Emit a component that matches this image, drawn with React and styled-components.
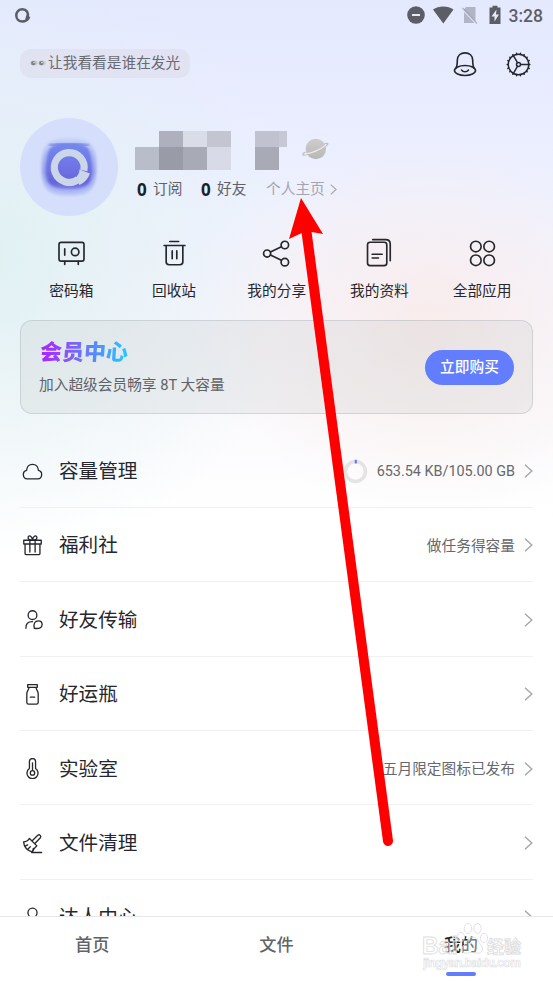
import styled, { createGlobalStyle, css } from 'styled-components';

const GlobalStyle = createGlobalStyle`
  * {
    box-sizing: border-box;
  }

  body {
    margin: 0;
    background: #fff;
    font-family: Roboto, 'Noto Sans CJK SC', sans-serif;
    color: #26272c;
  }
`;

// Whole phone screen
const Screen = styled.div`
  position: relative;
  display: flex;
  flex-direction: column;
  width: 553px;
  height: 983px;
  overflow: hidden;
  background:
    radial-gradient(ellipse 230px 190px at 430px 325px, rgba(249, 234, 233, 0.85), rgba(250, 236, 234, 0.45) 50%, rgba(250, 236, 234, 0) 100%),
    radial-gradient(ellipse 330px 300px at -20px 260px, rgba(224, 241, 242, 1), rgba(226, 241, 243, 0.5) 50%, rgba(226, 241, 243, 0) 100%),
    linear-gradient(#e4e9fe 0, #e9ecff 100px, #eef1ff 200px, #f4f4fd 290px, #fafafd 400px, #fff 520px);
`;

const StatusBar = styled.div`
  display: flex;
  justify-content: space-between;
  align-items: center;
  flex: none;
  height: 30px;
  padding: 0 10px 0 14px;
  color: #5c5e66;
`;

const StatusIcons = styled.div`
  display: flex;
  align-items: center;
`;

const Clock = styled.span`
  margin-left: 8px;
  padding-top: 1px;
  font-size: 17.5px;
  font-weight: 500;
  line-height: 20px;
`;

const Header = styled.header`
  display: flex;
  justify-content: space-between;
  align-items: center;
  flex: none;
  height: 68px;
  padding: 0 22px 0 20px;
`;

const Chip = styled.div`
  display: flex;
  align-items: center;
  width: 170px;
  height: 29px;
  margin-top: -2px;
  padding: 0 0 1px 10px;
  border-radius: 11px;
  background: #e1e3f3;
  color: #686a72;
  font-size: 14.7px;
  line-height: 22px;
  white-space: nowrap;

  svg {
    margin-right: 2px;
  }
`;

const HeaderActions = styled.div`
  display: flex;
  align-items: center;
  gap: 28px;
`;

const Profile = styled.section`
  display: flex;
  flex: none;
  height: 118px;
  padding: 20px 20px 0;
`;

const Avatar = styled.div`
  display: flex;
  align-items: center;
  justify-content: center;
  width: 98px;
  height: 98px;
  border-radius: 50%;
  background: #d5dffb;
`;

const ProfileInfo = styled.div`
  padding: 13px 0 0 17px;
`;

const NameRow = styled.div`
  display: flex;
  height: 39px;
`;

// Hidden nickname, shown as coarse blocks
const Mosaic = styled.div`
  display: grid;
  grid-template-columns: repeat(6, 24px) 8px;
  grid-template-rows: 16px 23px;
  width: 152px;
`;

const Block = styled.i`
  background: ${({ $color }) => $color};
`;

const PlanetBox = styled.div`
  margin: 6px 0 0 14px;
`;

const Stats = styled.div`
  display: flex;
  align-items: center;
  height: 22px;
  margin-top: 8px;
  padding-left: 2px;
  font-size: 14.7px;
  line-height: 22px;
  white-space: nowrap;
`;

const Stat = styled.span`
  display: flex;
  align-items: center;
  width: 64px;
  color: #606269;

  b {
    width: 16px;
    padding-top: 1px;
    color: #202126;
    font-family: 'Noto Sans', Roboto, sans-serif;
    font-size: 17px;
  }
`;

const HomeLink = styled.span`
  display: flex;
  align-items: center;
  gap: 5px;
  margin-left: 1px;
  color: #a3a5af;
`;

const Shortcuts = styled.nav`
  display: grid;
  grid-template-columns: repeat(5, 102.7px);
  flex: none;
  height: 104px;
  padding: 25px 0 0 20px;
`;

const Shortcut = styled.div`
  display: flex;
  flex-direction: column;
  align-items: center;
  font-size: 14.7px;
  line-height: 22px;

  svg {
    margin-bottom: 14px;
  }
`;

const VipCard = styled.section`
  display: flex;
  justify-content: space-between;
  align-items: center;
  flex: none;
  height: 94px;
  margin: 0 20px;
  padding: 0 18px;
  border: 1px solid rgba(150, 155, 162, 0.3);
  border-radius: 12px;
  background: rgba(190, 195, 198, 0.22);
`;

const VipTitle = styled.div`
  width: 90px;
  padding-left: 1px;
  font-size: 22px;
  font-weight: 900;
  line-height: 28px;
  white-space: nowrap;
  color: transparent;
  background: linear-gradient(90deg, #a72bff 8%, #7c63f5 38%, #4f91ff 66%, #29c3ff 95%);
  background-clip: text;
  transform: skewX(-4deg);
`;

const VipText = styled.div`
  margin-top: 7px;
  color: #606269;
  font-size: 14.7px;
  line-height: 22px;
`;

const BuyButton = styled.button`
  width: 89px;
  height: 35px;
  padding: 0 0 3px;
  border: 0;
  border-radius: 18px;
  background: #637dff;
  color: #fff;
  font-family: inherit;
  font-size: 14.7px;
  font-weight: 500;
`;

const List = styled.div`
  flex: 1;
  min-height: 0;
  padding: 19.4px 20px 0;
  overflow: hidden;
`;

const Row = styled.div`
  display: flex;
  align-items: center;
  height: 74.4px;
  padding-top: 2px;
  border-bottom: 1px solid #f0f1f2;
`;

const RowIcon = styled.span`
  display: flex;
  justify-content: center;
  width: 24px;
  margin-right: 15px;
`;

const RowTitle = styled.span`
  flex: 1;
  padding-top: 2px;
  font-size: 19.6px;
  line-height: 28px;
`;

const RowNote = styled.span`
  margin-right: 9px;
  padding-bottom: ${({ $latin }) => ($latin ? 0 : '2px')};
  color: #66686d;
  font-size: ${({ $latin }) => ($latin ? '14.4px' : '14.7px')};
`;

const Ring = styled.svg`
  margin-right: 9px;
`;

const TabBar = styled.footer`
  display: grid;
  grid-template-columns: repeat(3, 1fr);
  flex: none;
  height: 67px;
  border-top: 1px solid #e6e6e8;
  background: #fff;
`;

const Tab = styled.div`
  position: relative;
  padding-top: 15px;
  text-align: center;
  color: #626367;
  font-size: 17.2px;
  font-weight: 500;
  line-height: 26px;

  ${({ $active }) =>
    $active &&
    css`
      color: #222327;

      &::after {
        content: '';
        position: absolute;
        left: 50%;
        bottom: 7px;
        width: 30px;
        height: 4px;
        margin-left: -15px;
        border-radius: 2px;
        background: #637dff;
      }
    `}
`;

// Overlays
const Arrow = styled.svg`
  position: absolute;
  left: 0;
  top: 0;
  pointer-events: none;
`;

const Watermark = styled.div`
  position: absolute;
  left: 422px;
  top: 921px;
  width: 104px;
  height: 52px;
`;

const Line = ({ size = 24, width = 1.5, color = '#26272c', children, ...rest }) => (
  <svg
    width={size}
    height={size}
    viewBox="0 0 24 24"
    fill="none"
    stroke={color}
    strokeWidth={width}
    strokeLinecap="round"
    strokeLinejoin="round"
    {...rest}
  >
    {children}
  </svg>
);

const Chevron = ({ small }) => (
  <svg width={small ? 7 : 9} height={small ? 11 : 14} viewBox="0 0 9 14" fill="none" stroke="#a5a6aa" strokeWidth="1.4">
    <path d="M1 .8 7.8 7 1 13.2" />
  </svg>
);

const teeth = Array.from({ length: 18 }, (_, i) => i * 20);

const BellIcon = () => (
  <Line size={26} width={1.5}>
    <path d="M3.600 16c1.300-2.300 1.300-5 1.300-7.700.2-3.800 2.900-6.600 7.100-6.600s6.900 2.800 7.100 6.600c0 2.700 0 5.400 1.300 7.700" />
    <ellipse cx="12" cy="18" rx="9.700" ry="4.600" />
    <path d="M8.900 17.600c1.200 2 5 2 6.200 0" />
  </Line>
);

const GearIcon = () => (
  <Line size={25} width={1.4}>
    <circle cx="12" cy="12" r="9.900" />
    <circle cx="12" cy="12" r="1.900" />
    <path d="M14 12h7.900M11 10.300 7.100 3.500M11 13.700l-3.900 6.800" />
    {teeth.map((deg) => (
      <path key={deg} d="M12 2V1.100" strokeWidth="1.400" transform={`rotate(${deg + 10} 12 12)`} />
    ))}
  </Line>
);

const AvatarLogo = () => (
  <svg width="62" height="62" viewBox="0 0 62 62">
    <defs>
      <linearGradient id="logo" x1="0" y1="0" x2="0" y2="1">
        <stop offset="0" stopColor="#7488ef" />
        <stop offset=".5" stopColor="#6f74e4" />
        <stop offset=".85" stopColor="#6864dc" />
        <stop offset="1" stopColor="#7d80e6" />
      </linearGradient>
      <linearGradient id="halo" x1="0" y1="0" x2="0" y2="1">
        <stop offset="0" stopColor="#b9c7f5" />
        <stop offset=".6" stopColor="#8c97e8" />
        <stop offset="1" stopColor="#a9b6f3" />
      </linearGradient>
      <filter id="soft">
        <feGaussianBlur stdDeviation=".9" />
      </filter>
    </defs>
    <path d="M31 2c21 0 28 6 28 29s-7 29-28 29S3 54 3 31 10 2 31 2z" fill="url(#halo)" opacity=".5" filter="url(#soft)" />
    <path d="M31 6c20 0 26 5 26 25 0 19-6 26-26 26S5 50 5 31 11 6 31 6z" fill="url(#halo)" opacity=".8" filter="url(#soft)" />
    <path d="M31 8c19 0 21 2 23 21 1 19-4 24-23 24S7 48 8 29C10 10 12 8 31 8z" fill="url(#logo)" filter="url(#soft)" />
    <path d="M11 9.500c10-2.500 30-2.500 40 0" fill="none" stroke="#5f70dd" strokeWidth="1.500" filter="url(#soft)" />
    <path d="M45.800 34.500A14.900 14.900 0 1 0 40 43.500" fill="none" stroke="#cbd6e8" strokeWidth="7.200" />
    <path d="m41.500 33.500 10.500 4c-2 5.500-5.500 9-10.500 11.500L37 42c2.500-2 4.300-4.500 4.500-8.500z" fill="#cbd6e8" />
  </svg>
);

const Eyes = () => (
  <svg width="16" height="8" viewBox="0 0 16 8">
    <ellipse cx="4" cy="4" rx="3.600" ry="2.400" fill="#c8cac9" />
    <ellipse cx="12" cy="4" rx="3.600" ry="2.400" fill="#c8cac9" />
    <circle cx="3.300" cy="4.100" r="2.200" fill="#7d8184" />
    <circle cx="11.300" cy="4.100" r="2.200" fill="#7d8184" />
    <circle cx="4" cy="3.600" r=".8" fill="#e4e5e5" />
    <circle cx="12" cy="3.600" r=".8" fill="#e4e5e5" />
  </svg>
);

const Planet = () => (
  <svg width="30" height="24" viewBox="0 0 30 24">
    <defs>
      <linearGradient id="planet" x1="0" y1="0" x2="0" y2="1">
        <stop offset="0" stopColor="#cecdcb" />
        <stop offset="1" stopColor="#b9b8b6" />
      </linearGradient>
    </defs>
    <circle cx="14.800" cy="12" r="10.200" fill="url(#planet)" />
    <path d="M4.500 15C1 16.500 1 19 4 18c7-1 16-5 21-9 3.500-2.500 1.500-3.500-1.500-2" fill="none" stroke="#bcbcbb" strokeWidth="1.200" />
    <path d="M4 17c7-1 16-5 21-9" fill="none" stroke="#e9e8e6" strokeWidth="1.400" />
  </svg>
);

const shortcuts = [
  {
    label: '密码箱',
    icon: (
      <>
        <rect x="0" y="1.300" width="24" height="18" rx="2" />
        <circle cx="15.500" cy="10.500" r="3.600" />
        <path d="M5.500 7.500v6M5.500 19.500v3M18.500 19.500v3" />
      </>
    ),
  },
  {
    label: '回收站',
    icon: (
      <path d="M7.500.5h8.500M2 4.300h20M4 4.500V20c0 2 1 2.800 2.800 2.800h10.400c1.800 0 2.800-.8 2.800-2.800V4.500M9.800 9.500v7.500M14.200 9.500v7.500" />
    ),
  },
  {
    label: '我的分享',
    icon: (
      <>
        <circle cx="3" cy="12" r="3.400" />
        <circle cx="20" cy="3.800" r="3.600" />
        <circle cx="20" cy="20.300" r="3.600" />
        <path d="m6.200 10.500 10.500-5M6.200 13.500l10.500 5" />
      </>
    ),
  },
  {
    label: '我的资料',
    icon: (
      <>
        <rect x="0.500" y="1.200" width="18.500" height="22.500" rx="2.500" />
        <path d="M5 12.700h9.500M5 16.300h6M5.500-1.400H18c3 0 4.300 1.300 4.300 4.300V19" />
      </>
    ),
  },
  {
    label: '全部应用',
    icon: (
      <>
        <circle cx="5.600" cy="5.300" r="5.100" />
        <circle cx="18.400" cy="5.300" r="5.100" />
        <circle cx="5.600" cy="18.500" r="5.100" />
        <circle cx="18.400" cy="18.500" r="5.100" />
      </>
    ),
  },
];

const rows = [
  {
    title: '容量管理',
    note: '653.54 KB/105.00 GB',
    ring: true,
    icon: <path d="M6 20.500a5 5 0 0 1-.8-9.800c.4-4.200 3-6.900 6.800-6.900s6.400 2.700 6.800 6.900a5 5 0 0 1-.8 9.800z" />,
  },
  {
    title: '福利社',
    note: '做任务得容量',
    icon: (
      <>
        <path d="M2 6h20v4.300H2zM3.500 10.300V21c0 1 .7 1.500 1.500 1.500h14c.8 0 1.500-.5 1.500-1.500V10.300M9 6v13.500M15 6v13.500" />
        <path d="M12 6C8 6 6.500 4.500 7 2.500 7.700 0 11.500.5 12 6c.5-5.500 4.300-6 5-3.500.5 2-1 3.500-5 3.500z" />
      </>
    ),
  },
  {
    title: '好友传输',
    icon: (
      <>
        <circle cx="12" cy="7" r="5" />
        <path d="M4.500 22c-.5-5 2.500-7.700 7.500-7.500M14 22c-1.300-5.500 1-8.500 4.500-8.500 3 0 4.500 2 4.500 4.300 0 3.500-3 5.200-9 4.200z" />
      </>
    ),
  },
  {
    title: '好运瓶',
    icon: (
      <path d="M6.500.8h11v3h-11zM8 3.800C8 7 5.500 7.500 5.500 11v10c0 1.500.5 2 2 2h9c1.500 0 2-.5 2-2V11c0-3.500-2.500-4-2.500-7.200M9.500 15h5" />
    ),
  },
  {
    title: '实验室',
    note: '五月限定图标已发布',
    icon: (
      <>
        <path d="M8.500 12V4c0-4.500 7-4.500 7 0v8a6.300 6.300 0 1 1-7 0z" />
        <circle cx="12" cy="17" r="2.500" />
        <path d="M12 14V5.500" />
      </>
    ),
  },
  {
    title: '文件清理',
    icon: (
      <>
        <path d="m8.500 6.200 8.500 8.500M12 8.500l6-6c2-1.500 4.500 1 3 3l-6 6.200M8.500 6.200c-1.800 2.800-4 4-6.700 4 .5 5.500 4.500 10 10 11.500 1.500-3 2.700-5 5.200-7M3.500 15l3-1.500M6.500 18.700l3-3M11.800 21.700l1.200-4M11 22.300h11.500" />
      </>
    ),
  },
  {
    title: '达人中心',
    icon: (
      <>
        <circle cx="12" cy="6.500" r="5.200" />
        <path d="M3 22c1-10 17-10 18 0" />
      </>
    ),
  },
];

const blocks = [
  'transparent', '#afb0bd', '#dadce8', '#c3c5d1', 'transparent', '#c0c2cf', '#c6c8d5',
  '#b9bcc9', '#999ba7', '#a8aab6', '#d8dae7', 'transparent', '#a8aab6', 'transparent',
];

export default function App() {
  return (
    <>
      <GlobalStyle />
      <Screen>
        <StatusBar>
          <svg width="17" height="17" viewBox="0 0 17 17" fill="none" stroke="currentColor" strokeWidth="2.500">
            <path d="M13.700 10.200C14.800 5.500 12.500 2.200 8.500 2.200S2.300 5 2.300 8.500s2.500 6 6.200 6c2.700 0 4.300-1 5.200-3" />
            <path d="m12.300 8.200 4 1.700c-.6 2-1.600 3.400-3.300 4.300l-1.700-2.300z" fill="currentColor" stroke="none" />
          </svg>
          <StatusIcons>
            <svg width="96" height="20" viewBox="0 0 96 20" fill="currentColor">
              <circle cx="11" cy="10" r="8.800" />
              <path d="M7 10h8" stroke="#e5e9fe" strokeWidth="2" />
              <path d="M28 4.500c5.500-4 15-4 20.500 0L38.300 18.500z" />
              <path d="M61 2h9.500v14.500L59 4.500zM59 7v11h10.500z" opacity=".38" />
              <path d="m57.500 3 14.500 15.500" stroke="currentColor" strokeWidth="1.200" opacity=".38" />
              <path d="M84.500 2.500h3V.8h5v1.700h3V19h-11z" />
              <path d="m91.500 4.500-5 7h3v5l4.500-7h-3z" fill="#e5e9fe" />
            </svg>
            <Clock>3:28</Clock>
          </StatusIcons>
        </StatusBar>

        <Header>
          <Chip>
            <Eyes />
            让我看看是谁在发光
          </Chip>
          <HeaderActions>
            <BellIcon />
            <GearIcon />
          </HeaderActions>
        </Header>

        <Profile>
          <Avatar>
            <AvatarLogo />
          </Avatar>
          <ProfileInfo>
            <NameRow>
              <Mosaic>
                {blocks.map((color, i) => (
                  <Block key={i} $color={color} />
                ))}
              </Mosaic>
              <PlanetBox>
                <Planet />
              </PlanetBox>
            </NameRow>
            <Stats>
              <Stat><b>0</b>订阅</Stat>
              <Stat><b>0</b>好友</Stat>
              <HomeLink>
                个人主页
                <Chevron small />
              </HomeLink>
            </Stats>
          </ProfileInfo>
        </Profile>

        <Shortcuts>
          {shortcuts.map((item) => (
            <Shortcut key={item.label}>
              <Line size={25} width={1.6} overflow="visible">{item.icon}</Line>
              {item.label}
            </Shortcut>
          ))}
        </Shortcuts>

        <VipCard>
          <div>
            <VipTitle>会员中心</VipTitle>
            <VipText>加入超级会员畅享 8T 大容量</VipText>
          </div>
          <BuyButton>立即购买</BuyButton>
        </VipCard>

        <List>
          {rows.map((row) => (
            <Row key={row.title}>
              <RowIcon>
                <Line size={21} width={1.5}>{row.icon}</Line>
              </RowIcon>
              <RowTitle>{row.title}</RowTitle>
              {row.ring && (
                <Ring width="25" height="25" viewBox="0 0 25 25" fill="none" strokeWidth="3.500">
                  <circle cx="12.500" cy="12.500" r="10" stroke="#e4e4e4" />
                  <path d="M12.800.8v3.700" stroke="#637dff" strokeWidth="2.200" />
                </Ring>
              )}
              {row.note && <RowNote $latin={row.ring}>{row.note}</RowNote>}
              <Chevron />
            </Row>
          ))}
        </List>

        <TabBar>
          <Tab>首页</Tab>
          <Tab>文件</Tab>
          <Tab $active>我的</Tab>
        </TabBar>

        <Watermark>
          <svg width="104" height="52" viewBox="0 0 104 52" fill="#fff" fillOpacity=".4" stroke="#dededf" strokeWidth=".9">
            <ellipse cx="39" cy="16" rx="3.600" ry="4.600" />
            <ellipse cx="46" cy="7.500" rx="3.700" ry="5" />
            <ellipse cx="55.500" cy="7.500" rx="3.700" ry="5" />
            <ellipse cx="62" cy="17" rx="3.600" ry="4.600" />
            <path d="M50 16c5 0 6 5 9 8 4 5 0 9-5 8-3-.6-5-.6-8 0-6 1-8-4-4-8 3-3 4-8 8-8z" />
            <text x="0" y="33" fontFamily="Liberation Sans" fontSize="23" fontWeight="700">Bai</text>
            <text x="65" y="32" fontFamily="Noto Sans CJK SC" fontSize="17" fontWeight="700">经验</text>
            <text x="1" y="46" fontFamily="Liberation Sans" fontSize="12" fontWeight="700" textLength="98" strokeWidth=".6">jingyan.baidu.com</text>
          </svg>
        </Watermark>

        <Arrow width="553" height="983" viewBox="0 0 553 983">
          <path d="M306 228 388 841" stroke="#fe0000" strokeWidth="10" strokeLinecap="round" />
          <path d="M301 198 323 234 306 231 289 239z" fill="#fe0000" />
        </Arrow>
      </Screen>
    </>
  );
}
